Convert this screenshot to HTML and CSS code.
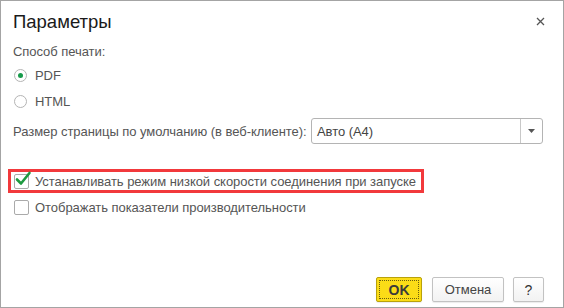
FILE: index.html
```html
<!DOCTYPE html>
<html lang="ru">
<head>
  <meta charset="UTF-8" />
  <title>Параметры</title>
  <link rel="stylesheet" href="styles.css">
</head>
<body>
  <div class="window">
    <div class="header">
      <h1 class="title">Параметры</h1>
      <span class="close">
        <svg width="9" height="9" viewBox="0 0 9 9"><path d="M1 1 L8 8 M8 1 L1 8" stroke="#555" stroke-width="1.3"/></svg>
      </span>
    </div>

    <div class="content">
      <div class="caption">Способ печати:</div>
      <label class="radio-row"><span class="radio checked"></span>PDF</label>
      <label class="radio-row"><span class="radio"></span>HTML</label>

      <div class="field-row">
        <span class="field-label">Размер страницы по умолчанию (в веб-клиенте):</span>
        <div class="select">
          <span class="select-value">Авто (А4)</span>
          <span class="select-btn"><svg width="7" height="4" viewBox="0 0 7 4"><path d="M0 0 H7 L3.5 4 Z" fill="#555"/></svg></span>
        </div>
      </div>

      <div class="checks">
        <label class="check-row highlight">
          <span class="checkbox">
            <svg width="18" height="16" viewBox="0 0 18 16"><path d="M3 8.5 L7 12.5 L15.5 2" fill="none" stroke="#1e9a40" stroke-width="2.6" stroke-linecap="round" stroke-linejoin="round"/></svg>
          </span>
          Устанавливать режим низкой скорости соединения при запуске
        </label>
        <label class="check-row"><span class="checkbox"></span>Отображать показатели производительности</label>
      </div>
    </div>

    <div class="footer">
      <button class="btn btn-ok"><span>OK</span></button>
      <button class="btn btn-cancel">Отмена</button>
      <button class="btn btn-help">?</button>
    </div>
  </div>
</body>
</html>
```

FILE: styles.css
```css
body { margin: 0; font-family: 'Liberation Sans', Arial, sans-serif; background: #fff; color: #555; }
.window { width: 564px; height: 308px; box-sizing: border-box; border: 1px solid #a4a4a4; display: flex; flex-direction: column; }
.header { display: flex; justify-content: space-between; align-items: flex-start; padding: 9px 18px 0 12px; }
.title { margin: 0; font-size: 18.5px; font-weight: normal; line-height: 24px; color: #1a1a1a; }
.close { display: flex; padding-top: 7px; }
.content { padding: 0 0 0 12px; font-size: 13px; letter-spacing: -0.05px; }
.caption { line-height: 20px; margin-top: 8px; }
.radio-row { display: flex; align-items: center; height: 26px; gap: 8px; padding-left: 1px; }
.radio { width: 13px; height: 13px; box-sizing: border-box; border: 1px solid #b4b4b4; border-radius: 50%; display: flex; align-items: center; justify-content: center; background: #fff; }
.radio.checked::after { content: ''; width: 5px; height: 5px; border-radius: 50%; background: #179b4b; }
.field-row { display: flex; align-items: center; height: 26px; margin-top: 4px; }
.field-label { width: 298px; }
.select { width: 232px; height: 26px; box-sizing: border-box; border: 1px solid #b4b4b4; border-radius: 3px; display: flex; align-items: center; }
.select-value { flex: 1; padding-left: 5px; color: #444; }
.select-btn { width: 21px; height: 100%; border-left: 1px solid #c8c8c8; display: flex; align-items: center; justify-content: center; }
.checks { margin-top: 24px; }
.check-row { display: flex; align-items: center; height: 26px; gap: 6px; padding-left: 1px; }
.highlight { width: 418px; box-sizing: border-box; outline: 3px solid #f2393c; outline-offset: -4px; padding-left: 7px; margin-left: -6px; }
.checkbox { width: 15px; height: 15px; box-sizing: border-box; border: 1px solid #aaa; border-radius: 2px; position: relative; background: #fff; }
.checkbox svg { position: absolute; left: -1px; top: -4px; }
.footer { margin-top: auto; display: flex; justify-content: flex-end; padding: 0 19px 5px 0; }
.btn { height: 25px; padding: 0; font-family: 'Liberation Sans', Arial, sans-serif; font-size: 13px; color: #444; background: linear-gradient(#fff, #f2f2f2); border: 1px solid #c2c2c2; border-radius: 2px; box-shadow: 0 1px 1px rgba(0,0,0,0.08); }
.btn-ok { width: 46px; padding: 2px; margin-right: 10px; background: #fbdc17; border-color: #b9a20a; font-weight: bold; font-size: 14px; color: #3a3a3a; }
.btn-ok span { display: flex; align-items: center; justify-content: center; height: 100%; border: 1px dotted #6a5d10; box-sizing: border-box; }
.btn-cancel { width: 72px; margin-right: 9px; }
.btn-help { width: 31px; font-size: 14px; color: #333; }
```
